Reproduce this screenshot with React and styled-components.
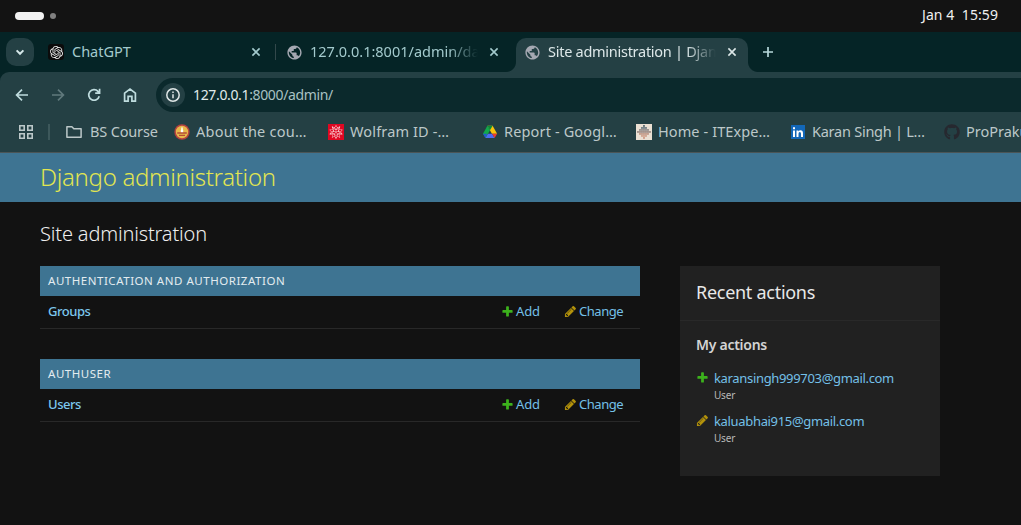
import React from "react";
import styled, { createGlobalStyle } from "styled-components";
import { SiOpenai, SiWolfram } from "react-icons/si";
import { MdPublic } from "react-icons/md";
import { FaGithub } from "react-icons/fa";

const Global = createGlobalStyle`
  *, *::before, *::after { box-sizing: border-box; }
  body {
    margin: 0;
    background: #121212;
    color: #eee;
    font-family: "Noto Sans", sans-serif;
    overflow: hidden;
  }
  svg { display: block; flex: none; }
`;

/* ---------- desktop bar ---------- */

const Screen = styled.div`
  height: 525px;
  overflow: hidden;
`;

const DesktopBar = styled.header`
  display: flex;
  align-items: center;
  height: 32px;
  padding: 0 23px 2px 15px;
  background: #131313;
`;

const WorkspacePill = styled.span`
  width: 29px;
  height: 8px;
  margin-top: 2px;
  border-radius: 4px;
  background: #f2f2f2;
`;

const WorkspaceDot = styled.span`
  width: 6px;
  height: 6px;
  margin: 2px 0 0 6px;
  border-radius: 50%;
  background: #808080;
`;

const Clock = styled.time`
  margin: 0 0 1px auto;
  color: #f0f0f0;
  font-size: 14px;
  letter-spacing: 0.08px;
  line-height: 19px;
  white-space: pre;
`;

/* ---------- tab strip ---------- */

const TabStrip = styled.nav`
  display: flex;
  align-items: flex-start;
  height: 40px;
  padding: 6px 0 0 6px;
  background: #052426;
`;

const TabSearch = styled.button`
  display: grid;
  place-items: center;
  flex: none;
  width: 28px;
  height: 28px;
  padding: 0;
  border: 0;
  border-radius: 10px;
  background: #244044;
  color: #d5e8e9;
`;

const Tab = styled.div`
  position: relative;
  display: flex;
  align-items: center;
  flex: none;
  width: ${(p) => p.$width}px;
  height: ${(p) => (p.$active ? 34 : 28)}px;
  padding: 0 ${(p) => p.$end}px ${(p) => (p.$active ? 6 : 0)}px ${(p) => p.$inset}px;
  border-radius: 10px 10px 0 0;
  background: ${(p) => (p.$active ? "#244044" : "transparent")};
  color: ${(p) => (p.$active ? "#dce7e8" : "#a3cacd")};

  &::before,
  &::after {
    content: "";
    display: ${(p) => (p.$active ? "block" : "none")};
    position: absolute;
    bottom: 0;
    width: 10px;
    height: 10px;
  }
  &::before {
    left: -10px;
    background: radial-gradient(circle at 0 0, transparent 9.5px, #244044 10.5px);
  }
  &::after {
    right: -10px;
    background: radial-gradient(circle at 100% 0, transparent 9.5px, #244044 10.5px);
  }
`;

const TabTitle = styled.span`
  flex: 1;
  min-width: 0;
  margin: 0 ${(p) => p.$end || 10}px 2px ${(p) => p.$gap}px;
  overflow: hidden;
  font-size: 14.5px;
  line-height: 20px;
  letter-spacing: ${(p) => p.$track || 0}px;
  white-space: nowrap;
  mask-image: ${(p) =>
    p.$fade ? "linear-gradient(to left, transparent, #000 30px)" : "none"};
`;

const TabDivider = styled.i`
  flex: none;
  width: 1px;
  height: 16px;
  margin-top: 6px;
  background: #33484b;
`;

const OpenAiBadge = styled.span`
  display: grid;
  place-items: center;
  flex: none;
  width: 16px;
  height: 16px;
  border-radius: 3px;
  background: #0b0b0b;
  color: #eee;
`;

const Globe = styled(MdPublic)`
  width: 17px;
  height: 17px;
  margin: 0 -1.5px;
  color: #a5a8b2;
`;

const NewTab = styled.span`
  display: grid;
  place-items: center;
  width: 40px;
  height: 28px;
  color: #b7d7da;
`;

/* ---------- toolbar ---------- */

const ToolbarBack = styled.div`
  background: #052426;
`;

const Toolbar = styled.div`
  display: flex;
  align-items: center;
  height: 46px;
  padding-left: 14px;
  border-radius: 9px 0 0 0;
  background: #244044;
`;

const NavButton = styled.span`
  display: grid;
  place-items: center;
  width: 16px;
  height: 16px;
  margin-right: 20px;
  color: ${(p) => (p.$disabled ? "#60797c" : "#bfdcde")};
`;

const AddressBar = styled.div`
  display: flex;
  align-items: center;
  flex: 1;
  height: 34px;
  margin-left: -2px;
  padding-left: 5px;
  border-radius: 17px 0 0 17px;
  background: #0b292c;
`;

const SiteInfo = styled.span`
  display: grid;
  place-items: center;
  width: 24px;
  height: 24px;
  margin-right: 8px;
  border-radius: 50%;
  background: #244044;
  color: #dfe6e6;
`;

const Url = styled.span`
  margin-bottom: 2px;
  color: #a9c1c3;
  font-size: 14px;
  letter-spacing: -0.35px;
`;

const UrlHost = styled.span`
  color: #e0eaea;
`;

const Bookmarks = styled.div`
  display: flex;
  align-items: center;
  height: 35px;
  padding: 0 0 6px 18px;
  overflow: hidden;
  border-bottom: 1px solid #4b5556;
  background: #244044;
`;

const BookmarksDivider = styled.i`
  flex: none;
  width: 2px;
  height: 16px;
  margin: 0 16px 0 14px;
  background: #3d585b;
`;

const Bookmark = styled.div`
  display: flex;
  align-items: center;
  flex: none;
  gap: ${(p) => p.$gap || 6}px;
  width: ${(p) => p.$width || 154}px;
  color: #bcc8c9;
`;

const BookmarkLabel = styled.span`
  margin-bottom: 2px;
  font-size: 14.5px;
  line-height: 20px;
  letter-spacing: ${(p) => p.$track}px;
  white-space: nowrap;
`;

const WolframBadge = styled.span`
  display: grid;
  place-items: center;
  width: 16px;
  height: 16px;
  background: #e00722;
  color: #fff;
`;

const GithubMark = styled(FaGithub)`
  width: 16px;
  height: 16px;
  color: #26282f;
`;

/* ---------- admin page ---------- */

const AdminHeader = styled.header`
  display: flex;
  align-items: center;
  height: 49px;
  padding: 0 40px 1px;
  background: #3e7492;
`;

const SiteName = styled.h1`
  margin: 0;
  color: #e2e650;
  font-size: 24px;
  font-weight: 300;
  line-height: 32px;
  letter-spacing: -0.31px;
`;

const Page = styled.main`
  padding: 18px 40px 0;
`;

const PageTitle = styled.h2`
  margin: 0 0 18px;
  color: #eee;
  font-size: 20px;
  font-weight: 300;
  line-height: 28px;
  letter-spacing: -0.16px;
`;

const Columns = styled.div`
  display: grid;
  grid-template-columns: 600px 260px;
  align-items: start;
  gap: 40px;
`;

const Module = styled.section`
  margin-bottom: 30px;
`;

const Caption = styled.h3`
  height: 30px;
  margin: 0;
  padding-left: 8px;
  background: #3e7492;
  color: #e3ecf0;
  font-size: 11.5px;
  font-weight: 400;
  line-height: 30px;
  letter-spacing: 0.53px;
  text-transform: uppercase;
`;

const ModelRow = styled.div`
  display: flex;
  align-items: center;
  height: 33px;
  padding: 0 16px 2px 8px;
  border-bottom: 1px solid #282828;
`;

const ModelName = styled.a`
  flex: 1;
  color: #7cc8ee;
  font-size: 13px;
  font-weight: 500;
  line-height: 18px;
  letter-spacing: -0.45px;
`;

const ActionLink = styled.a`
  display: flex;
  align-items: center;
  gap: 2px;
  width: ${(p) => p.$width}px;
  color: #74c0e8;
  font-size: 13px;
  line-height: 18px;
  letter-spacing: ${(p) => p.$track}px;
`;

const Sidebar = styled.aside`
  height: 210px;
  background: #212121;
`;

const SidebarTitle = styled.h2`
  height: 55px;
  margin: 0;
  padding-left: 16px;
  border-bottom: 1px solid #292929;
  color: #e8e8e8;
  font-size: 18px;
  font-weight: 400;
  line-height: 52px;
  letter-spacing: -0.28px;
`;

const ActionsHeading = styled.h3`
  margin: 14px 0 14px 16px;
  color: #d4d4d4;
  font-size: 14px;
  font-weight: 600;
  line-height: 20px;
  letter-spacing: -0.27px;
`;

const ActionList = styled.ul`
  display: grid;
  gap: 9px;
  margin: 0;
  padding: 0 16px;
  list-style: none;
`;

const ActionItem = styled.li`
  display: grid;
  grid-template-columns: 13px 1fr;
  grid-template-rows: 18px 16px;
  column-gap: 5px;
  align-items: center;
  height: 34px;

  svg { margin-top: -2px; }
`;

const ActionTarget = styled.a`
  color: #74c0e8;
  font-size: 13px;
  line-height: 18px;
  letter-spacing: -0.33px;
`;

const ActionKind = styled.span`
  grid-column: 2;
  color: #b8b8b8;
  font-size: 10px;
  line-height: 16px;
  letter-spacing: -0.2px;
`;

/* ---------- icons ---------- */

const Stroke = ({ size = 16, width = 1.7, children }) => (
  <svg width={size} height={size} viewBox="0 0 16 16" fill="none" stroke="currentColor" strokeWidth={width}>
    {children}
  </svg>
);

const Close = () => (
  <Stroke width={1.6}>
    <path d="M4.4 4.4l7.2 7.2M11.6 4.4l-7.2 7.2" />
  </Stroke>
);

const AddIcon = () => (
  <svg width="13" height="13" viewBox="0 0 1792 1792">
    <path fill="#3cb11c" d="M1600 796v192q0 40-28 68t-68 28h-416v416q0 40-28 68t-68 28h-192q-40 0-68-28t-28-68v-416h-416q-40 0-68-28t-28-68v-192q0-40 28-68t68-28h416v-416q0-40 28-68t68-28h192q40 0 68 28t28 68v416h416q40 0 68 28t28 68z" />
  </svg>
);

const ChangeIcon = () => (
  <svg width="13" height="13" viewBox="0 0 1792 1792">
    <path fill="#b3920b" d="M491 1536l91-91-235-235-91 91v107h128v128h107zm523-928q0-22-22-22-10 0-17 7l-542 542q-7 7-7 17 0 22 22 22 10 0 17-7l542-542q7-7 7-17zm-54-192l416 416-832 832h-416v-416zm683 96q0 53-37 90l-166 166-416-416 166-165q36-38 90-38 53 0 91 38l235 234q37 39 37 91z" />
  </svg>
);

const FolderIcon = () => (
  <Stroke width={1.5}>
    <path d="M.9 13.2V2.8h5l1.9 2h7.3v8.4z" strokeLinejoin="round" />
  </Stroke>
);

const AppsIcon = () => (
  <Stroke width={1.6}>
    <path d="M1.8 1.8h4.4v4.4H1.8zM9.8 1.8h4.4v4.4H9.8zM1.8 9.8h4.4v4.4H1.8zM9.8 9.8h4.4v4.4H9.8z" />
  </Stroke>
);

const CourseIcon = () => (
  <svg width="16" height="16" viewBox="0 0 16 16">
    <circle cx="8" cy="8" r="7.7" fill="#b5413f" />
    <circle cx="8" cy="8" r="6.2" fill="#e8b84b" />
    <path d="M8 2.4l1 2v2.2H7V4.4z" fill="#fff3dc" />
    <path d="M6.8 6h2.4v2.6H6.8z" fill="#fff" />
    <path d="M3.2 8.4h9.6v1.2H3.2z" fill="#a8322f" />
    <path d="M5 10.8h6v1H5z" fill="#a8322f" />
  </svg>
);

const DriveIcon = () => (
  <svg width="16" height="16" viewBox="0 0 16 16">
    <path d="M5.4 1.8h5.2l4.5 7.9H9.9z" fill="#fbc30b" />
    <path d="M5.4 1.8L8 6.3 3.6 14 1 9.7z" fill="#12a84c" />
    <path d="M5.4 1.8h5.2L8 6.3z" fill="#098a3c" />
    <path d="M1 9.7h4.1L3.4 14z" fill="#2555d0" />
    <path d="M6 9.7h4.1l2.5 4.3H3.5z" fill="#4d6bf2" />
    <path d="M10.1 9.7h5L12.6 14z" fill="#ea3a33" />
  </svg>
);

const beadRows = [
  [1, "#39505c"],
  [3, "#526470"],
  [5, "#80797a"],
  [7, "#8e7b76"],
  [5, "#b98a78"],
  [3, "#cb957e"],
  [1, "#c98a74"],
];

const BeadIcon = () => (
  <svg width="16" height="16" viewBox="0 0 16 16">
    <path d="M0 0h16v16H0z" fill="#eae0d3" />
    {beadRows.flatMap(([count, fill], row) =>
      Array.from({ length: count }, (_, i) => (
        <rect
          key={`${row}-${i}`}
          x={8 - count + i * 2 + 0.1}
          y={1.1 + row * 2}
          width="1.75"
          height="1.75"
          rx=".4"
          fill={fill}
        />
      ))
    )}
  </svg>
);

const LinkedInIcon = () => (
  <svg width="16" height="16" viewBox="0 0 16 16">
    <path d="M1 1h14v14H1z" fill="#1267b8" />
    <path d="M3 6.5h2V13H3zM3 3.3h2v2H3zM6.5 6.5h1.9v.9q.7-1.1 2.1-1.1 2.5 0 2.5 2.9V13h-2V9.7q0-1.6-1.2-1.6-1.3 0-1.3 1.6V13h-2z" fill="#fff" />
  </svg>
);

/* ---------- data ---------- */

const bookmarks = [
  { label: "BS Course", icon: <FolderIcon />, width: 108, gap: 8, track: -0.16 },
  { label: "About the cou…", icon: <CourseIcon />, track: 0.25 },
  { label: "Wolfram ID -…", icon: <WolframBadge><SiWolfram size={14} /></WolframBadge>, track: 0.15 },
  { label: "Report - Googl…", icon: <DriveIcon />, track: 0.15 },
  { label: "Home - ITExpe…", icon: <BeadIcon />, track: 0.1 },
  { label: "Karan Singh | L…", icon: <LinkedInIcon />, track: -0.25 },
  { label: "ProPraku", icon: <GithubMark />, track: 0 },
];

const modules = [
  { caption: "Authentication and Authorization", model: "Groups" },
  { caption: "Authuser", model: "Users" },
];

const recent = [
  { target: "karansingh999703@gmail.com", icon: <AddIcon /> },
  { target: "kaluabhai915@gmail.com", icon: <ChangeIcon /> },
];

export default function App() {
  return (
    <Screen>
      <Global />
      <DesktopBar>
        <WorkspacePill />
        <WorkspaceDot />
        <Clock>{"Jan 4  15:59"}</Clock>
      </DesktopBar>

      <TabStrip>
        <TabSearch>
          <Stroke width={2}>
            <path d="M4.6 6.4L8 9.8l3.4-3.4" />
          </Stroke>
        </TabSearch>
        <Tab $width={241} $inset={14} $end={11}>
          <OpenAiBadge>
            <SiOpenai size={13} />
          </OpenAiBadge>
          <TabTitle $gap={8}>ChatGPT</TabTitle>
          <Close />
        </Tab>
        <TabDivider />
        <Tab $width={240} $inset={11} $end={14}>
          <Globe />
          <TabTitle $gap={9} $end={8} $fade>127.0.0.1:8001/admin/dash</TabTitle>
          <Close />
        </Tab>
        <Tab $width={232} $inset={9} $end={8} $active>
          <Globe />
          <TabTitle $gap={9} $end={8} $track={-0.27} $fade>Site administration | Django</TabTitle>
          <Close />
        </Tab>
        <NewTab>
          <Stroke width={1.7}>
            <path d="M8 3v10M3 8h10" />
          </Stroke>
        </NewTab>
      </TabStrip>

      <ToolbarBack>
        <Toolbar>
          <NavButton>
            <Stroke><path d="M14 8H3M8 2.6L2.6 8 8 13.4" /></Stroke>
          </NavButton>
          <NavButton $disabled>
            <Stroke><path d="M2 8h11M8 2.6L13.4 8 8 13.4" /></Stroke>
          </NavButton>
          <NavButton>
            <Stroke><path d="M13.2 9.2A5.3 5.3 0 1 1 12 4.4l1.4 1.4M13.6 1.8v4.4H9.2" /></Stroke>
          </NavButton>
          <NavButton>
            <Stroke><path d="M2.6 6.2L8 2l5.4 4.2v7.9H9.9V9.4H6.1v4.7H2.6z" /></Stroke>
          </NavButton>
          <AddressBar>
            <SiteInfo>
              <Stroke width={1.5}>
                <circle cx="8" cy="8" r="6.2" />
                <path d="M8 7.2v4M8 4.4v1.6" />
              </Stroke>
            </SiteInfo>
            <Url><UrlHost>127.0.0.1</UrlHost>:8000/admin/</Url>
          </AddressBar>
        </Toolbar>
      </ToolbarBack>

      <Bookmarks>
        <Bookmark as="span" $width={16}><AppsIcon /></Bookmark>
        <BookmarksDivider />
        {bookmarks.map((b) => (
          <Bookmark key={b.label} $width={b.width} $gap={b.gap}>
            {b.icon}
            <BookmarkLabel $track={b.track}>{b.label}</BookmarkLabel>
          </Bookmark>
        ))}
      </Bookmarks>

      <AdminHeader>
        <SiteName>Django administration</SiteName>
      </AdminHeader>
      <Page>
        <PageTitle>Site administration</PageTitle>
        <Columns>
          <div>
            {modules.map((m) => (
              <Module key={m.caption}>
                <Caption>{m.caption}</Caption>
                <ModelRow>
                  <ModelName>{m.model}</ModelName>
                  <ActionLink $width={63} $track={-0.1}><AddIcon />Add</ActionLink>
                  <ActionLink $width={60} $track={-0.45}><ChangeIcon />Change</ActionLink>
                </ModelRow>
              </Module>
            ))}
          </div>
          <Sidebar>
            <SidebarTitle>Recent actions</SidebarTitle>
            <ActionsHeading>My actions</ActionsHeading>
            <ActionList>
              {recent.map((r) => (
                <ActionItem key={r.target}>
                  {r.icon}
                  <ActionTarget>{r.target}</ActionTarget>
                  <ActionKind>User</ActionKind>
                </ActionItem>
              ))}
            </ActionList>
          </Sidebar>
        </Columns>
      </Page>
    </Screen>
  );
}
